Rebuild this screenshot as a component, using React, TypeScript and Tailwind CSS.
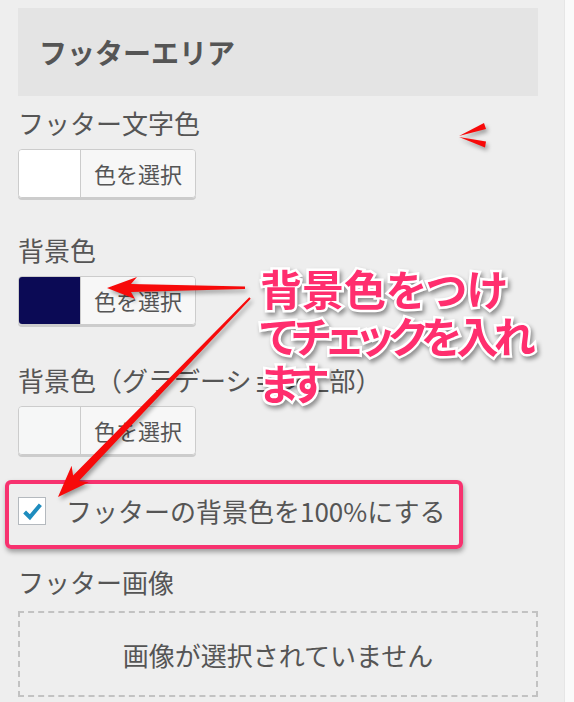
import React from "react";

const font = "font-['Noto_Sans_CJK_JP','Noto_Sans',sans-serif]";

function ColorButton({ swatch }: { swatch: string }) {
  return (
    <div className="mt-[8px] flex h-[49px] w-[178px] overflow-hidden rounded-[4px] border border-[#cccccc] shadow-[0_2px_0_#cccccc]">
      <div className={`h-full w-[62px] border-r border-[#cccccc] ${swatch}`} />
      <div className="flex flex-1 items-center justify-center bg-[#f7f7f7] text-[22px] text-[#555555]">
        色を選択
      </div>
    </div>
  );
}

function Label({ children, className = "" }: { children: React.ReactNode; className?: string }) {
  return (
    <div className={`h-[36px] text-[26px] leading-[36px] text-[#555555] ${className}`}>{children}</div>
  );
}

export default function App() {
  return (
    <div className={`relative flex h-[702px] w-[574px] overflow-hidden bg-[#eeeeee] ${font}`}>
      <div className="flex w-[564px] flex-col px-[18px] pt-[8px]">
        <div className="flex h-[88px] w-[520px] items-center bg-[#e4e4e4] pl-[21px] text-[28px] font-bold text-[#555555]">
          フッターエリア
        </div>
        <Label className="mt-[9px]">フッター文字色</Label>
        <ColorButton swatch="bg-white" />
        <Label className="mt-[34px]">背景色</Label>
        <ColorButton swatch="bg-[#0b0a55]" />
        <Label className="mt-[37px]">背景色（グラデーション上部）</Label>
        <ColorButton swatch="bg-[#f6f7f7]" />
        <div className="mt-[38px] flex h-[36px] items-center">
          <div className="flex h-[28px] w-[28px] items-center justify-center border border-[#b4b9be] bg-white">
            <svg width="21" height="21" viewBox="0 0 20 20">
              <path d="M2.5 10.5 L7.5 15.5 L17.5 3.5" fill="none" stroke="#1e8cbe" strokeWidth="3.8" strokeLinecap="butt" strokeLinejoin="miter" />
            </svg>
          </div>
          <div className="ml-[20px] text-[26px] leading-[36px] text-[#555555]">フッターの背景色を100%にする</div>
        </div>
        <Label className="mt-[35px]">フッター画像</Label>
        <div className="mt-[11px] flex h-[86px] w-[520px] items-center justify-center border-2 border-dashed border-[#c2c2c2] text-[26px] text-[#555555]">
          画像が選択されていません
        </div>
      </div>
      <div className="h-full flex-1 border-l border-[#e6e6e6] bg-[#fafafa]" />

      {/* annotation: pink frame */}
      <div className="pointer-events-none absolute left-[5px] top-[480px] h-[69px] w-[458px] rounded-[6px] border-[4px] border-[#f7326f] shadow-[1px_3px_5px_rgba(0,0,0,0.35)]" />

      {/* annotation: arrows */}
      <svg className="pointer-events-none absolute left-0 top-0 drop-shadow-[2px_3px_2px_rgba(0,0,0,0.35)]" width="574" height="702" viewBox="0 0 574 702">
        <polygon fill="#f70a0a" points="107,288 135,299 131,292 245,289 245,286.5 131,284 137,277" />
        <polygon fill="#f70a0a" points="58,497 88.8,482.3 78.9,481.1 250.7,298.7 249.3,297.3 73.1,475.5 71.6,465.7" />
        <polygon fill="#f70a0a" points="459,136 484,123 486,129" />
        <polygon fill="#f70a0a" points="459,137 486,141.5 485,147.5" />
      </svg>

      {/* annotation: pink text */}
      <div className="pointer-events-none absolute left-[260px] top-[264px] font-['Noto_Sans_CJK_JP',sans-serif] text-[42px] font-bold leading-[47px] text-[#ff2e6e] [font-feature-settings:'palt'] [paint-order:stroke_fill] [-webkit-text-stroke:5px_#ffffff] drop-shadow-[2px_3px_2px_rgba(0,0,0,0.4)]">
        <div>背景色をつけ</div>
        <div className="tracking-[-5px]">てチェックを入れ</div>
        <div className="tracking-[-8px]">ます</div>
      </div>
    </div>
  );
}
